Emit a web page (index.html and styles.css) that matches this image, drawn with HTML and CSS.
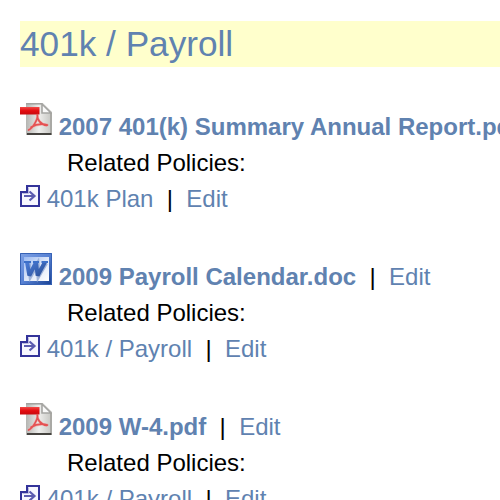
FILE: index.html
```
<!DOCTYPE html>
<html lang="en">
<head>
<meta charset="utf-8">
<title>401k / Payroll</title>
<link rel="stylesheet" href="styles.css">
</head>
<body>
<svg class="defs" aria-hidden="true">
  <defs>
    <linearGradient id="page" x1="0" y1="0" x2="1" y2="0">
      <stop offset="0" stop-color="#b5b5b2"/><stop offset=".5" stop-color="#eeeeec"/><stop offset="1" stop-color="#c4c4c0"/>
    </linearGradient>
    <linearGradient id="band" x1="0" y1="0" x2="0" y2="1">
      <stop offset="0" stop-color="#f04a48"/><stop offset=".5" stop-color="#e40c10"/><stop offset="1" stop-color="#c8090d"/>
    </linearGradient>
    <linearGradient id="frame" x1="0" y1="0" x2="1" y2="1">
      <stop offset="0" stop-color="#7fa2e6"/><stop offset=".5" stop-color="#5781d3"/><stop offset="1" stop-color="#163f91"/>
    </linearGradient>
    <linearGradient id="sheet" x1="0" y1="0" x2="1" y2="1">
      <stop offset="0" stop-color="#9bbaf2"/><stop offset=".5" stop-color="#dde6f8"/><stop offset="1" stop-color="#ffffff"/>
    </linearGradient>
    <linearGradient id="stroke" x1="0" y1="0" x2="1" y2="1">
      <stop offset="0" stop-color="#4a7bd6"/><stop offset="1" stop-color="#2a4f98"/>
    </linearGradient>
  </defs>
  <symbol id="pdf" viewBox="0 0 32 32">
    <path d="M6 0H23L32 9V32H6Z" fill="url(#page)"/>
    <path d="M6 .8H22.5" stroke="#a3a3a0" stroke-width="1.6"/>
    <path d="M22 1V10H31Z" fill="#fafafa" stroke="#a5a5a2" stroke-width="1.6"/>
    <path d="M7 31H31.5" stroke="#45433f" stroke-width="2"/>
    <path d="M31 10V30" stroke="#a3a29d" stroke-width="1.6"/>
    <path d="M0 4H19.5V11.5H0Z" fill="url(#band)"/>
    <path d="M17.3 12C18.5 16 12.5 25.5 8.5 27M17.3 12C17 16 20 21.5 27 22.5M11 24.2C16 21.2 22 20.6 27.5 22" fill="none" stroke="#f0a09e" stroke-width="3" opacity=".55"/>
    <path d="M17.3 11.5C18.5 16 12.5 25.5 8.5 27M17.3 12C17 16 20 21.5 27 22.5M11 24.2C16 21.2 22 20.6 27.5 22" fill="none" stroke="#e55253" stroke-width="1.7" stroke-linecap="round"/>
  </symbol>
  <symbol id="doc" viewBox="0 0 32 32">
    <path d="M0 0H32V32H0Z" fill="url(#frame)"/>
    <path d="M.5 .5H31.5V31.5H.5Z" fill="none" stroke="#3762b5"/>
    <path d="M4 4H29V28H4Z" fill="url(#sheet)"/>
    <path d="M8.5 10L10.5 23L17.5 11L18.5 23L26 10" fill="none" stroke="#8fa6d2" stroke-width="4.2" opacity=".8"/>
    <path d="M7 9L9.3 22.5L16 9.5L17.6 22.5L25 9" fill="none" stroke="url(#stroke)" stroke-width="4" stroke-linejoin="bevel"/>
    <path d="M4 9H11M13 9H19M21.5 9H28" stroke="#3c6fc8" stroke-width="2"/>
  </symbol>
  <symbol id="policy" viewBox="0 0 20 22">
    <path d="M1 21V7H7V1H19V21Z" fill="#f7f7ff" stroke="#33339a" stroke-width="2"/>
    <path d="M2.5 8.5H8.5V2.5" fill="none" stroke="#b9b9e0"/>
    <path d="M4 11H15M9.5 6.5L14.5 11L9.5 15.5" fill="none" stroke="#5c5cb0" stroke-width="2.2"/>
  </symbol>
</svg>
<h1 class="heading"><a href="#">401k / Payroll</a></h1>
<section class="entry">
  <div class="file"><svg class="file-icon"><use href="#pdf"/></svg> <a class="name" href="#">2007 401(k) Summary Annual Report.pdf</a>&nbsp; |&nbsp; <a href="#">Edit</a></div>
  <div class="related">Related Policies:</div>
  <div class="policy"><svg class="policy-icon"><use href="#policy"/></svg> <a href="#">401k Plan</a>&nbsp; |&nbsp; <a href="#">Edit</a></div>
</section>
<section class="entry">
  <div class="file"><svg class="file-icon"><use href="#doc"/></svg> <a class="name" href="#">2009 Payroll Calendar.doc</a>&nbsp; |&nbsp; <a href="#">Edit</a></div>
  <div class="related">Related Policies:</div>
  <div class="policy"><svg class="policy-icon"><use href="#policy"/></svg> <a href="#">401k / Payroll</a>&nbsp; |&nbsp; <a href="#">Edit</a></div>
</section>
<section class="entry">
  <div class="file"><svg class="file-icon"><use href="#pdf"/></svg> <a class="name" href="#">2009 W-4.pdf</a>&nbsp; |&nbsp; <a href="#">Edit</a></div>
  <div class="related">Related Policies:</div>
  <div class="policy"><svg class="policy-icon"><use href="#policy"/></svg> <a href="#">401k / Payroll</a>&nbsp; |&nbsp; <a href="#">Edit</a></div>
</section>
</body>
</html>
```
FILE: styles.css
```
html {
  height: 100%;
  overflow: hidden;
}

body {
  height: 100%;
  box-sizing: border-box;
  margin: 0;
  padding: 21px 0 0 20px;
  overflow: hidden;
  background: #fff;
  color: #000;
  font: 24px/36px "Liberation Sans", Arial, sans-serif;
  white-space: nowrap;
}

a {
  color: #6082b0;
  text-decoration: none;
}

.defs {
  position: absolute;
  width: 0;
  height: 0;
}

.heading {
  margin: 0;
  background: #ffffcc;
  font-size: 35.2px;
  font-weight: normal;
  line-height: 46px;
}

.entry {
  margin-top: 36px;
}

.file {
  height: 42px;
}

.file-icon {
  width: 32px;
  height: 32px;
  vertical-align: baseline;
}

.name {
  font-weight: bold;
}

.related {
  padding-left: 47px;
}

.policy-icon {
  width: 20px;
  height: 22px;
  vertical-align: baseline;
}
```
